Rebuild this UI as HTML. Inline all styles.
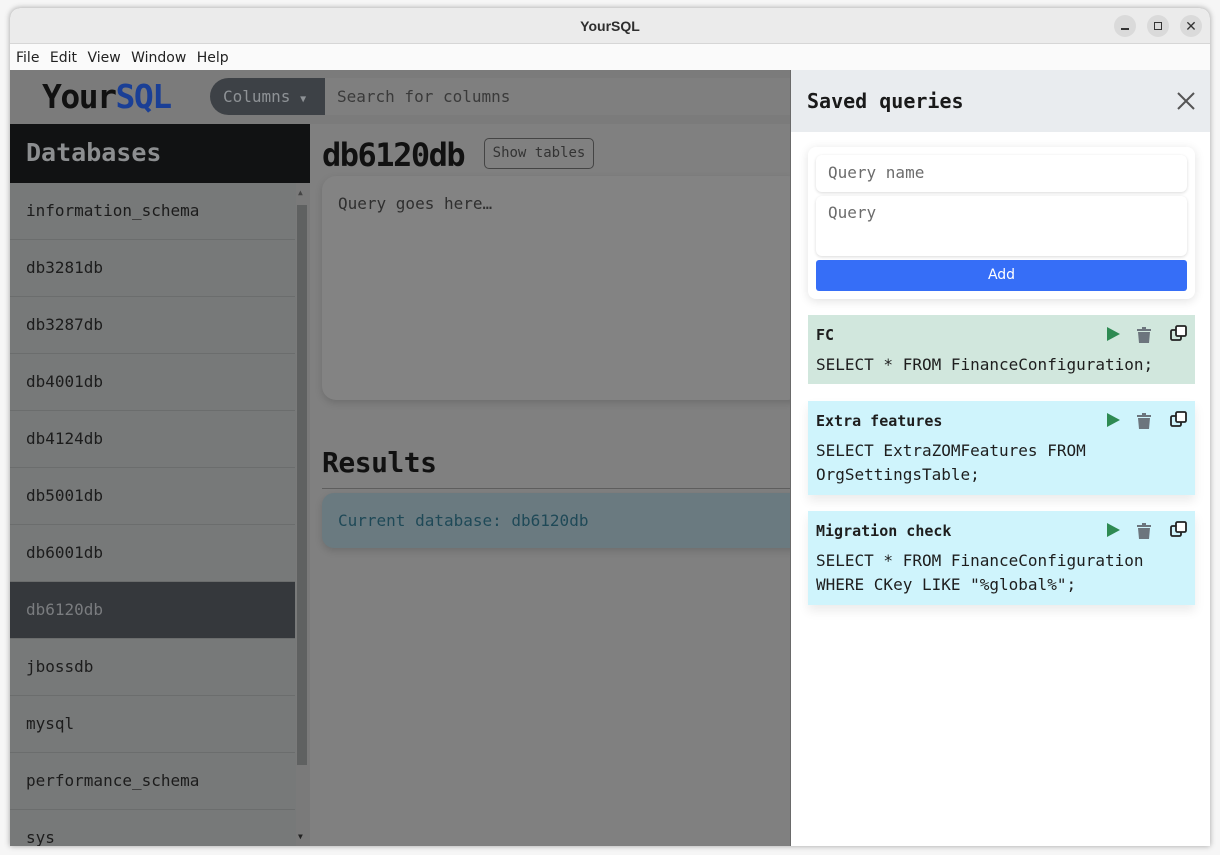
<!DOCTYPE html>
<html><head><meta charset="utf-8"><style>
*{box-sizing:border-box;margin:0;padding:0}
body{width:1220px;height:855px;background:#f6f6f6;position:relative;overflow:hidden;font-family:"DejaVu Sans Mono","Liberation Mono",monospace}
.win{position:absolute;left:10px;top:8px;width:1200px;height:838px;background:#808080;border-radius:10px 10px 0 0;overflow:hidden;box-shadow:0 0 6px rgba(0,0,0,.35)}
.title{position:absolute;left:0;top:0;width:1200px;height:36px;background:#ebebeb;border-bottom:1px solid #d6d6d6;text-align:center;font:bold 14px "Liberation Sans",sans-serif;line-height:37px;color:#2e2e2e}
.wb{position:absolute;top:7px;width:22px;height:22px;border-radius:50%;background:#dadada}
.menu{position:absolute;left:0;top:36px;width:1200px;height:26px;background:#fafafa;font:14px "DejaVu Sans",sans-serif;color:#222;line-height:28px;padding-left:6px;word-spacing:6px}
.hdr{position:absolute;left:0;top:62px;width:780px;height:54px;background:#7b7b7b}
.logo{position:absolute;left:32px;top:7px;font:bold 33px "DejaVu Sans Mono",monospace;color:#111;letter-spacing:-1.5px}
.logo span{color:#1a3f96}
.colbtn{position:absolute;left:200px;top:8px;width:115px;height:37px;background:#3d4146;border-radius:19px 0 0 19px;color:#8e9296;font-size:16px;line-height:37px;padding-left:13px}
.srch{position:absolute;left:315px;top:8px;width:470px;height:37px;background:#7f7f7f;color:#3a3a3a;font-size:16px;line-height:37px;padding-left:12px}
.side{position:absolute;left:0;top:116px;width:300px;height:722px;background:#777979}
.dbh{height:59px;background:#111213;color:#8c8e90;font:bold 25px "DejaVu Sans Mono",monospace;line-height:57px;padding-left:16px}
.it{width:285px;height:57px;border-bottom:1px solid #6b6d6d;font-size:16px;line-height:56px;padding-left:16px;color:#1c1c1c}
.it.sel{background:#35383c;color:#7a7c7f}
.panel{position:absolute;left:780px;top:62px;width:420px;height:776px;background:#fff;border-left:1px solid #6a6a6a}
.ph{height:62px;background:#e9ecef;font:bold 20px "DejaVu Sans Mono",monospace;line-height:62px;padding-left:16px;color:#1a1a1a}
.card{position:absolute;left:17px;width:387px;font-size:16px;color:#1e1e1e;padding:7px 8px}
.card b{font-size:15px;display:block;height:31px;line-height:26px}
.card p{line-height:24px}
</style></head><body>
<div class="win">
<div class="title">YourSQL
<div class="wb" style="left:1104px"><div style="position:absolute;left:7px;top:13px;width:8px;height:1.5px;background:#333"></div></div>
<div class="wb" style="left:1137px"><div style="position:absolute;left:7px;top:7px;width:8px;height:8px;border:1.5px solid #333"></div></div>
<div class="wb" style="left:1170px;font:14px sans-serif;line-height:22px;color:#333">✕</div>
</div>
<div class="menu">File Edit View Window Help</div>
<div class="hdr"><div class="logo">Your<span>SQL</span></div>
<div class="colbtn">Columns <span style="font-size:10px">▼</span></div>
<div class="srch">Search for columns</div></div>
<div class="side"><div class="dbh">Databases</div>
<div class="it">information_schema</div><div class="it">db3281db</div><div class="it">db3287db</div><div class="it">db4001db</div><div class="it">db4124db</div><div class="it">db5001db</div><div class="it">db6001db</div><div class="it sel">db6120db</div><div class="it">jbossdb</div><div class="it">mysql</div><div class="it">performance_schema</div><div class="it">sys</div>
<div style="position:absolute;left:286px;top:59px;width:14px;height:663px;background:#7a7a7a"></div>
<div style="position:absolute;left:287px;top:81px;width:10px;height:560px;background:#5f6161"></div>
<div style="position:absolute;left:288px;top:64px;font-size:8px;color:#444">▲</div>
<div style="position:absolute;left:288px;top:708px;font-size:8px;color:#222">▼</div>
</div>
<div style="position:absolute;left:312px;top:128px;font:bold 32px 'DejaVu Sans Mono',monospace;color:#111;letter-spacing:-1.5px">db6120db</div>
<div style="position:absolute;left:474px;top:130px;width:110px;height:31px;border:1px solid #444;border-radius:5px;font-size:14px;line-height:29px;text-align:center;color:#333">Show tables</div>
<div style="position:absolute;left:312px;top:168px;width:480px;height:224px;background:#838383;border-radius:14px;box-shadow:0 3px 8px rgba(0,0,0,.15);font-size:16px;color:#2f2f2f;padding:18px 16px">Query goes here…</div>
<div style="position:absolute;left:312px;top:438px;font:bold 28px 'DejaVu Sans Mono',monospace;color:#111;letter-spacing:-0.5px">Results</div>
<div style="position:absolute;left:312px;top:480px;width:470px;height:1px;background:#5e5e5e"></div>
<div style="position:absolute;left:312px;top:485px;width:480px;height:55px;background:#6a7a80;border-radius:12px;box-shadow:0 3px 8px rgba(0,0,0,.15);font-size:16px;color:#1f4957;line-height:55px;padding-left:16px">Current database: db6120db</div>
<div class="panel"><div class="ph">Saved queries</div>
<svg style="position:absolute;left:386px;top:22px" width="18" height="18"><path d="M1 1L17 17M17 1L1 17" stroke="#555" stroke-width="2"/></svg>
<div style="position:absolute;left:17px;top:77px;width:387px;height:152px;background:#fff;border-radius:8px;box-shadow:0 2px 10px rgba(0,0,0,.12)">
<div style="position:absolute;left:8px;top:8px;width:371px;height:37px;background:#fff;border-radius:6px;box-shadow:0 1px 3px rgba(0,0,0,.15);font-size:16px;color:#6c6c6c;line-height:36px;padding-left:12px">Query name</div>
<div style="position:absolute;left:8px;top:49px;width:371px;height:60px;background:#fff;border-radius:6px;box-shadow:0 1px 3px rgba(0,0,0,.15);font-size:16px;color:#6c6c6c;padding:7px 12px">Query</div>
<div style="position:absolute;left:8px;top:113px;width:371px;height:31px;background:#366ef7;border-radius:3px;color:#fff;font:14px 'DejaVu Sans',sans-serif;line-height:31px;text-align:center">Add</div>
</div>
<div class="card" style="top:245px;height:69px;background:#d1e7dd"><b>FC</b><p>SELECT * FROM FinanceConfiguration;</p></div>
<div class="card" style="top:331px;height:94px;background:#cff4fc;box-shadow:0 6px 10px rgba(0,0,0,.08)"><b>Extra features</b><p>SELECT ExtraZOMFeatures FROM<br>OrgSettingsTable;</p></div>
<div class="card" style="top:441px;height:94px;background:#cff4fc;box-shadow:0 6px 10px rgba(0,0,0,.08)"><b>Migration check</b><p>SELECT * FROM FinanceConfiguration<br>WHERE CKey LIKE "%global%";</p></div>
<svg style="position:absolute;left:0;top:0" width="420" height="600">
<g id="i"><path d="M316 257l13 7-13 7z" fill="#2e8a52"/><path d="M346 259h14v2h-14zM351 257h4v2h-4zM347 262h12l-1 11h-10z" fill="#6c757d"/><rect x="380" y="260" width="10" height="10" rx="1.5" fill="none" stroke="#222" stroke-width="1.8"/><rect x="385" y="256" width="10" height="10" rx="1.5" fill="#fff" stroke="#222" stroke-width="1.8"/></g>
<use href="#i" y="86"/><use href="#i" y="196"/>
</svg>
</div>
</div>
</body></html>
